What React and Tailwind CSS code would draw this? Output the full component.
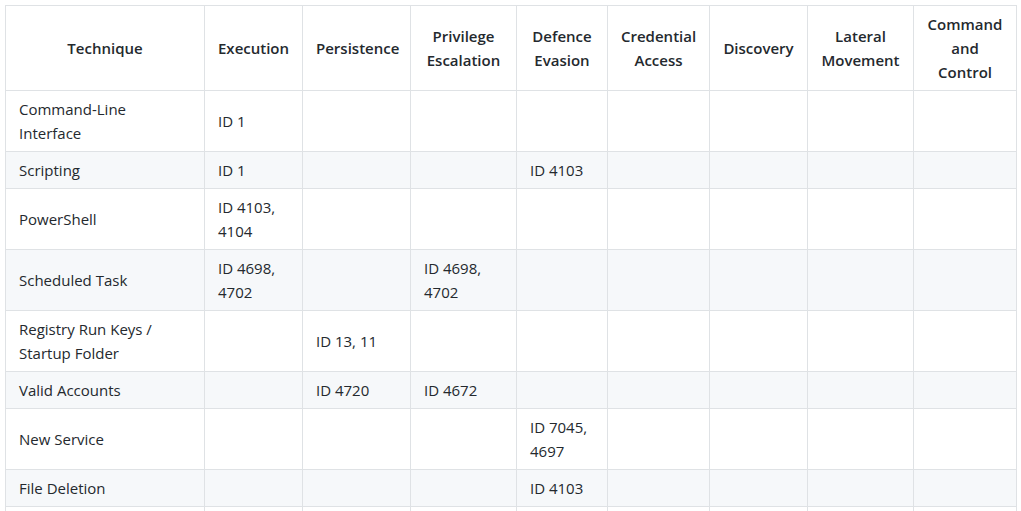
import React from "react";

const headers = [
  ["Technique"],
  ["Execution"],
  ["Persistence"],
  ["Privilege", "Escalation"],
  ["Defence", "Evasion"],
  ["Credential", "Access"],
  ["Discovery"],
  ["Lateral", "Movement"],
  ["Command", "and", "Control"],
];

const widths = [199, 98, 108, 106, 91, 102, 98, 106, 103];

const rows = [
  [["Command-Line", "Interface"], ["ID 1"], null, null, null, null, null, null, null],
  [["Scripting"], ["ID 1"], null, null, ["ID 4103"], null, null, null, null],
  [["PowerShell"], ["ID 4103,", "4104"], null, null, null, null, null, null, null],
  [["Scheduled Task"], ["ID 4698,", "4702"], null, ["ID 4698,", "4702"], null, null, null, null, null],
  [["Registry Run Keys /", "Startup Folder"], null, ["ID 13, 11"], null, null, null, null, null, null],
  [["Valid Accounts"], null, ["ID 4720"], ["ID 4672"], null, null, null, null, null],
  [["New Service"], null, null, null, ["ID 7045,", "4697"], null, null, null, null],
  [["File Deletion"], null, null, null, ["ID 4103"], null, null, null, null],
];

function Lines({ lines }) {
  if (!lines) return null;
  return lines.map((l, i) => (
    <React.Fragment key={i}>
      {i > 0 && <br />}
      {l}
    </React.Fragment>
  ));
}

export default function App() {
  return (
    <div
      className="bg-white p-[5px] text-[#24292e] text-[15px] leading-[24px]"
      style={{ fontFamily: '"Open Sans", "Noto Sans", sans-serif' }}
    >
      <table className="table-fixed border-collapse w-[1011px]">
        <colgroup>
          {widths.map((w, i) => (
            <col key={i} style={{ width: w }} />
          ))}
        </colgroup>
        <thead>
          <tr>
            {headers.map((h, i) => (
              <th
                key={i}
                className="border border-[#dfe2e5] px-[13px] py-[6px] font-semibold text-center align-middle"
              >
                <Lines lines={h} />
              </th>
            ))}
          </tr>
        </thead>
        <tbody>
          {rows.map((r, ri) => (
            <tr key={ri} className={ri % 2 === 1 ? "bg-[#f6f8fa]" : "bg-white"}>
              {r.map((c, ci) => (
                <td
                  key={ci}
                  className="border border-[#dfe2e5] px-[13px] py-[6px] align-middle text-left whitespace-nowrap"
                >
                  <Lines lines={c} />
                </td>
              ))}
            </tr>
          ))}
          <tr className="bg-white h-[37px]">
            {widths.map((_, ci) => (
              <td key={ci} className="border border-[#dfe2e5] px-[13px] py-[6px]" />
            ))}
          </tr>
        </tbody>
      </table>
    </div>
  );
}
